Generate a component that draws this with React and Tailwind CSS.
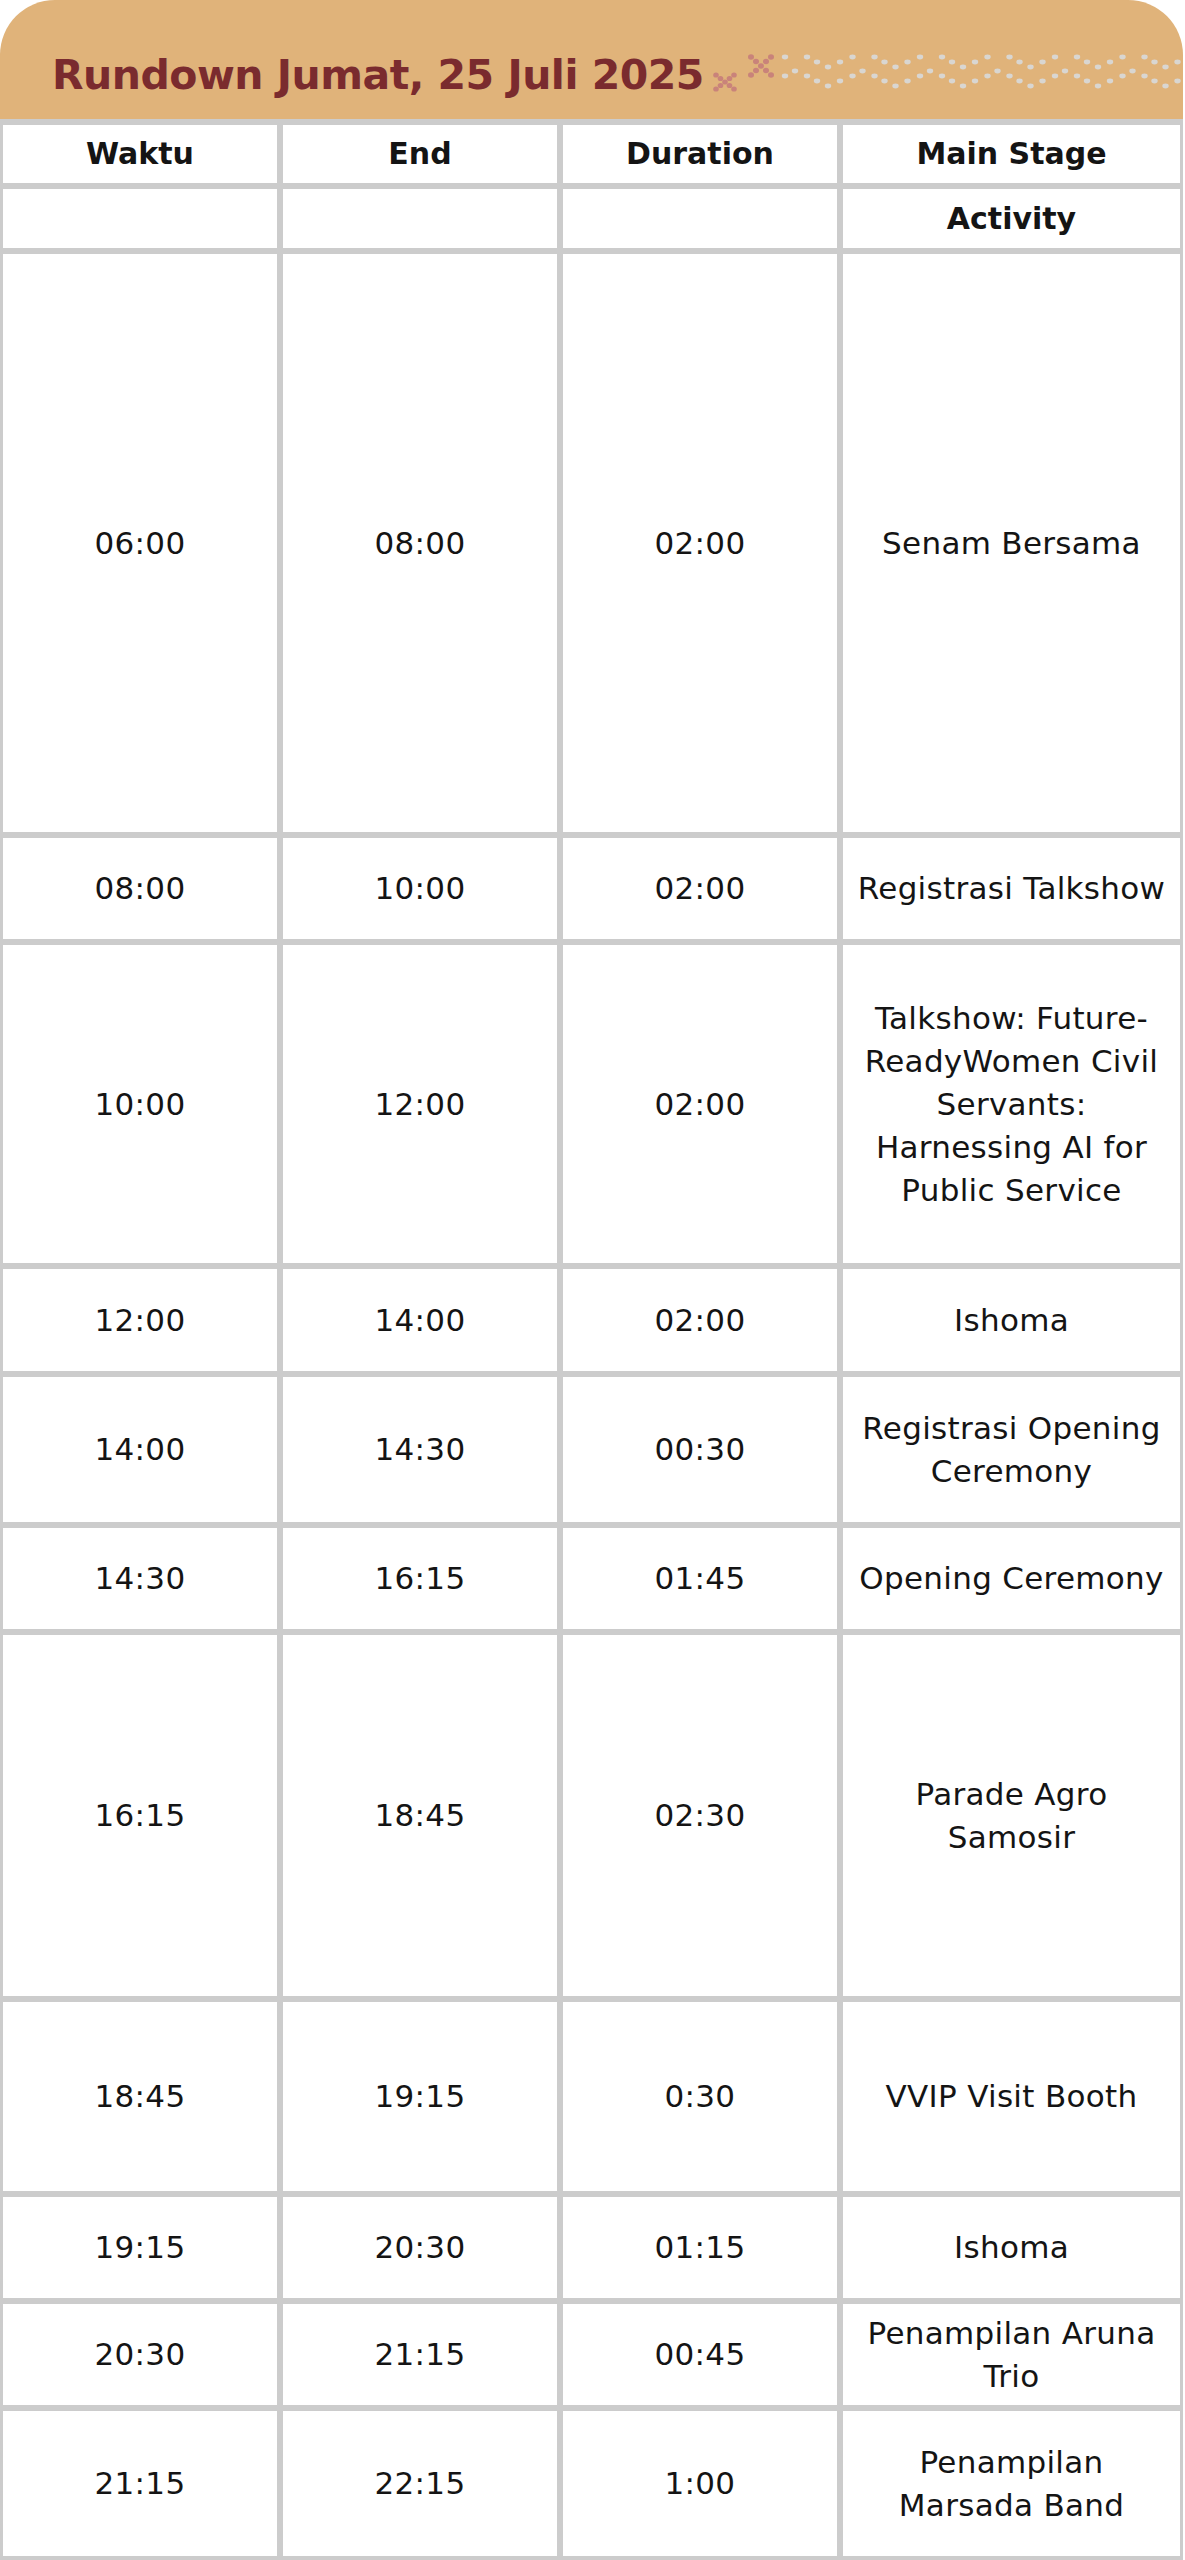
import React from "react";

const rows = [
  { h: "h-[578px]", w: "06:00", e: "08:00", d: "02:00", a: ["Senam Bersama"] },
  { h: "h-[101px]", w: "08:00", e: "10:00", d: "02:00", a: ["Registrasi Talkshow"] },
  { h: "h-[318px]", w: "10:00", e: "12:00", d: "02:00", a: ["Talkshow: Future-", "ReadyWomen Civil", "Servants:", "Harnessing AI for", "Public Service"] },
  { h: "h-[102px]", w: "12:00", e: "14:00", d: "02:00", a: ["Ishoma"] },
  { h: "h-[145px]", w: "14:00", e: "14:30", d: "00:30", a: ["Registrasi Opening", "Ceremony"] },
  { h: "h-[101px]", w: "14:30", e: "16:15", d: "01:45", a: ["Opening Ceremony"] },
  { h: "h-[361px]", w: "16:15", e: "18:45", d: "02:30", a: ["Parade Agro", "Samosir"] },
  { h: "h-[189px]", w: "18:45", e: "19:15", d: "0:30", a: ["VVIP Visit Booth"] },
  { h: "h-[101px]", w: "19:15", e: "20:30", d: "01:15", a: ["Ishoma"] },
  { h: "h-[101px]", w: "20:30", e: "21:15", d: "00:45", a: ["Penampilan Aruna", "Trio"] },
  { h: "h-[145px]", w: "21:15", e: "22:15", d: "1:00", a: ["Penampilan", "Marsada Band"] },
];

function Dot({ x, y, c, rx = 3.2, ry = 2.4 }) {
  return <ellipse cx={x} cy={y} rx={rx} ry={ry} fill={c} />;
}

function Decoration() {
  const pink = "#c9837a";
  const gray = "#d9d6d1";
  const dots = [];
  const xs = [[0, 0], [-4.5, -3.5], [-9, -7], [4.5, -3.5], [9, -7], [-4.5, 3.5], [-9, 7], [4.5, 3.5], [9, 7]];
  xs.forEach(([dx, dy], i) => dots.push(<Dot key={"s" + i} x={25 + dx} y={37 + dy} c={pink} rx={2.8} ry={2.6} />));
  const bx = [[0, 0], [-5, -4.5], [-10, -9], [5, -4.5], [10, -9], [-5, 4.5], [-10, 9], [5, 4.5], [10, 9]];
  bx.forEach(([dx, dy], i) => dots.push(<Dot key={"b" + i} x={61 + dx} y={21 + dy} c={pink} rx={3} ry={2.8} />));
  for (let k = 0; k < 7; k++) {
    const x0 = 85 + 67.5 * k;
    [0, 19].forEach((oy, j) => {
      const pts = [[x0, 12], [x0 + 22, 12], [x0 + 32, 17], [x0 + 43, 22], [x0 + 55, 17]];
      pts.forEach(([px, py], i) => dots.push(<Dot key={`z${k}-${j}-${i}`} x={px} y={py + oy} c={gray} />));
    });
    dots.push(<Dot key={`p${k}`} x={x0 + 10} y={26} c={gray} />);
  }
  return (
    <svg className="absolute left-[700px] top-[45px]" width="483" height="50" viewBox="0 0 483 50">
      {dots}
    </svg>
  );
}

function Cell({ children, h, bold }) {
  return (
    <div className={`${h} bg-white flex flex-col items-center justify-center text-center text-[#141414] ${bold ? "font-bold text-[30px] leading-[36px]" : "text-[31px] leading-[43px] tracking-[0.3px]"}`}>
      {children}
    </div>
  );
}

export default function App() {
  return (
    <div className="w-[1185px] bg-white" style={{ fontFamily: '"DejaVu Sans", "Liberation Sans", sans-serif' }}>
      <div className="w-[1183px]">
        <div className="relative h-[119px] bg-[#e0b37a] rounded-t-[55px] pt-[55px] pl-[52px]">
          <h1 className="text-[41px] leading-[41px] font-bold text-[#7a2b2e] tracking-[-0.5px] whitespace-nowrap">
            Rundown Jumat, 25 Juli 2025
          </h1>
          <Decoration />
        </div>
        <div className="bg-[#cccccc] pt-[6px] px-[3px] pb-[4px] grid grid-cols-[274px_274px_274px_337px] gap-[6px]">
          <Cell h="h-[58px]" bold>Waktu</Cell>
          <Cell h="h-[58px]" bold>End</Cell>
          <Cell h="h-[58px]" bold>Duration</Cell>
          <Cell h="h-[58px]" bold>Main Stage</Cell>
          <Cell h="h-[59px]" bold></Cell>
          <Cell h="h-[59px]" bold></Cell>
          <Cell h="h-[59px]" bold></Cell>
          <Cell h="h-[59px]" bold>Activity</Cell>
          {rows.map((r, i) => (
            <React.Fragment key={i}>
              <Cell h={r.h}>{r.w}</Cell>
              <Cell h={r.h}>{r.e}</Cell>
              <Cell h={r.h}>{r.d}</Cell>
              <Cell h={r.h}>
                {r.a.map((l, j) => (
                  <span key={j} className="block whitespace-nowrap">{l}</span>
                ))}
              </Cell>
            </React.Fragment>
          ))}
        </div>
      </div>
    </div>
  );
}
